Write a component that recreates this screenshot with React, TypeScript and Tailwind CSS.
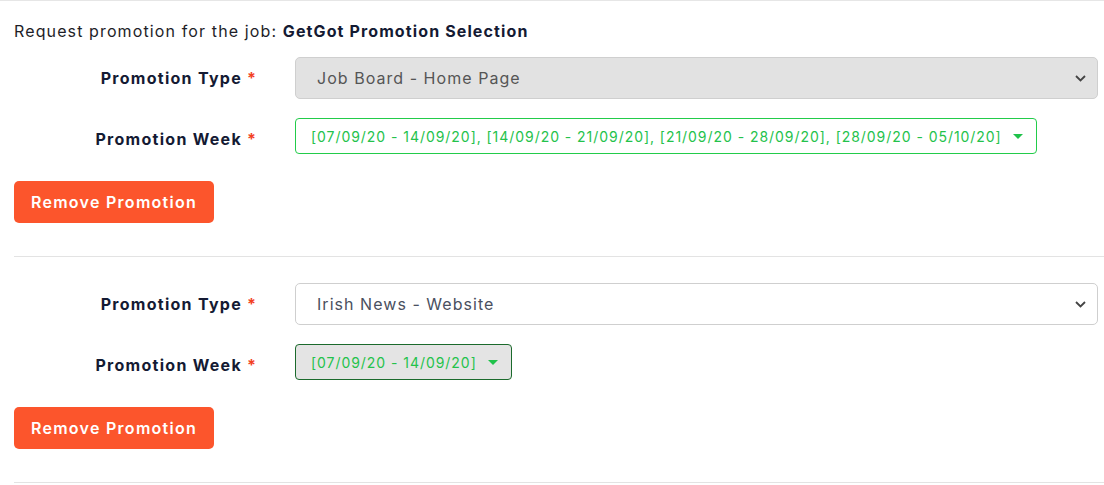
import React from "react";

type Promotion = {
  type: string;
  weeks: string[];
  disabled?: boolean;
  pickedStyle: "outline" | "filled";
};

const promotions: Promotion[] = [
  {
    type: "Job Board - Home Page",
    disabled: true,
    pickedStyle: "outline",
    weeks: ["07/09/20 - 14/09/20", "14/09/20 - 21/09/20", "21/09/20 - 28/09/20", "28/09/20 - 05/10/20"],
  },
  {
    type: "Irish News - Website",
    pickedStyle: "filled",
    weeks: ["07/09/20 - 14/09/20"],
  },
];

function Chevron() {
  return (
    <svg width="11" height="7" viewBox="0 0 11 7" fill="none" className="shrink-0">
      <path d="M1 1l4.5 4.5L10 1" stroke="#444" strokeWidth="1.8" />
    </svg>
  );
}

function Caret() {
  return (
    <svg width="10" height="5" viewBox="0 0 10 5" className="shrink-0">
      <path d="M0 0h10L5 5z" fill="#1fc24a" />
    </svg>
  );
}

function FieldLabel({ children }: { children: React.ReactNode }) {
  return (
    <div className="w-[242px] shrink-0 pt-[9px] text-right text-[16px] leading-6 font-bold tracking-[0.08em] text-[#141a33]">
      {children} <span className="tracking-normal text-[#f2401f]">*</span>
    </div>
  );
}

function PromotionBlock({ p }: { p: Promotion }) {
  return (
    <div>
      <div className="flex items-start pr-[6px]">
        <FieldLabel>Promotion Type</FieldLabel>
        <div
          className={
            "ml-[39px] flex h-[42px] flex-1 items-center justify-between rounded-[5px] border border-[#cfcfcf] pl-[21px] pr-[11px] text-[16px] tracking-[0.065em] " +
            (p.disabled ? "bg-[#e2e2e2] text-[#555555]" : "bg-white text-[#4a5060]")
          }
        >
          <span>{p.type}</span>
          <Chevron />
        </div>
      </div>

      <div className="mt-[19px] flex items-start">
        <FieldLabel>Promotion Week</FieldLabel>
        <div
          className={
            "ml-[39px] flex h-[36px] items-center gap-[11px] rounded-[4px] border pl-[15px] pr-[13px] text-[14px] tracking-[0.068em] text-[#24c24b] " +
            (p.pickedStyle === "outline" ? "border-[#22cc4a] bg-white" : "border-[#1b6a2c] bg-[#e4e4e4]")
          }
        >
          <span className="whitespace-nowrap">{p.weeks.map((w) => `[${w}]`).join(", ")}</span>
          <Caret />
        </div>
      </div>

      <button
        type="button"
        className="mt-[27px] h-[42px] w-[200px] rounded-[5px] bg-[#fc552c] text-[16px] font-semibold tracking-[0.08em] text-white"
      >
        Remove Promotion
      </button>

      <div className="mt-[33px] h-px bg-[#e3e3e3]" />
    </div>
  );
}

export default function App() {
  return (
    <div className="min-h-[485px] border-t border-[#e6e6e6] bg-white font-['Inter','Liberation_Sans',sans-serif]">
      <div className="pl-[14px]">
        <p className="pt-[18px] text-[16px] leading-6 tracking-[0.07em] text-[#1e1e28]">
          Request promotion for the job: <span className="font-bold text-[#141a33]">GetGot Promotion Selection</span>
        </p>
        <div className="mt-[14px] flex flex-col gap-[26px]">
          {promotions.map((p, i) => (
            <PromotionBlock key={i} p={p} />
          ))}
        </div>
      </div>
    </div>
  );
}
